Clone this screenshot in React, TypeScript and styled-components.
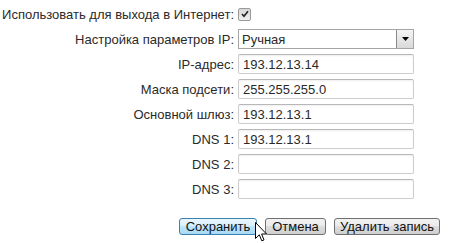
import React from "react";
import styled, { createGlobalStyle } from "styled-components";

const Global = createGlobalStyle`
  html, body { margin: 0; padding: 0; background: #fff; }
  body { font-family: "Liberation Sans", Arial, sans-serif; font-size: 13px; color: #2a2a2a; }
`;

const Page = styled.div`
  width: 457px;
  height: 243px;
  position: relative;
  overflow: hidden;
`;

const Form = styled.div`
  display: grid;
  grid-template-columns: 234px 176px;
  grid-auto-rows: 20px;
  column-gap: 4px;
  row-gap: 5px;
  padding-top: 4px;
`;

const Label = styled.div`
  display: flex;
  align-items: center;
  justify-content: flex-end;
  white-space: nowrap;
  font-size: 13px;
  color: #2a2a2a;
`;

const Cell = styled.div`
  display: flex;
  align-items: center;
`;

const Check = styled.span`
  width: 11px;
  height: 11px;
  border: 1px solid #9a9a9a;
  border-radius: 2px;
  background: linear-gradient(#d8d8d8, #eeeeee);
  display: flex;
  align-items: center;
  justify-content: center;
`;

const Input = styled.input`
  box-sizing: border-box;
  width: 176px;
  height: 20px;
  margin: 0;
  padding: 0 4px;
  border: 1px solid #cdcdcd;
  border-top-color: #b8b8b8;
  border-radius: 2px;
  box-shadow: inset 0 1px 2px rgba(0, 0, 0, 0.07);
  font-family: "Liberation Sans", Arial, sans-serif;
  font-size: 13px;
  color: #2a2a2a;
  outline: none;
`;

const Select = styled.div`
  box-sizing: border-box;
  width: 176px;
  height: 20px;
  border: 1px solid #a5a5a5;
  display: flex;
  align-items: stretch;
  background: #fff;
`;

const SelectText = styled.div`
  flex: 1;
  display: flex;
  align-items: center;
  padding-left: 3px;
  font-size: 13px;
`;

const ArrowBox = styled.div`
  width: 16px;
  border-left: 1px solid #8a8a8a;
  background: linear-gradient(#f4f4f4, #d9d9d9);
  display: flex;
  align-items: center;
  justify-content: center;
`;

const Buttons = styled.div`
  display: flex;
  gap: 8px;
  padding-left: 179px;
  margin-top: 19px;
`;

const Button = styled.button<{ $hover?: boolean; $w: number }>`
  box-sizing: border-box;
  width: ${(p) => p.$w}px;
  height: 17px;
  margin: 0;
  padding: 0 2px;
  border: 1px solid ${(p) => (p.$hover ? "#3c7fb1" : "#707070")};
  border-radius: 3px;
  background: ${(p) =>
    p.$hover
      ? "linear-gradient(#eaf6fd 0%, #d9f0fc 45%, #bee6fd 50%, #a7d9f5 100%)"
      : "linear-gradient(#f2f2f2 0%, #ebebeb 45%, #dddddd 50%, #cfcfcf 100%)"};
  font-family: "Liberation Sans", Arial, sans-serif;
  font-size: 13px;
  line-height: 15px;
  color: #111;
`;

const Cursor = styled.svg`
  position: absolute;
  left: 255px;
  top: 222px;
`;

const rows = [
  { label: "IP-адрес:", value: "193.12.13.14" },
  { label: "Маска подсети:", value: "255.255.255.0" },
  { label: "Основной шлюз:", value: "193.12.13.1" },
  { label: "DNS 1:", value: "193.12.13.1" },
  { label: "DNS 2:", value: "" },
  { label: "DNS 3:", value: "" },
];

export default function App() {
  return (
    <Page>
      <Global />
      <Form>
        <Label>Использовать для выхода в Интернет:</Label>
        <Cell>
          <Check>
            <svg width="8" height="8" viewBox="0 0 8 8">
              <path d="M1 4 L3 6.3 L7 1.2" stroke="#222" strokeWidth="1.6" fill="none" />
            </svg>
          </Check>
        </Cell>
        <Label>Настройка параметров IP:</Label>
        <Cell>
          <Select>
            <SelectText>Ручная</SelectText>
            <ArrowBox>
              <svg width="7" height="4" viewBox="0 0 7 4">
                <path d="M0 0 H7 L3.5 4 Z" fill="#000" />
              </svg>
            </ArrowBox>
          </Select>
        </Cell>
        {rows.map((r) => (
          <React.Fragment key={r.label}>
            <Label>{r.label}</Label>
            <Cell>
              <Input defaultValue={r.value} readOnly />
            </Cell>
          </React.Fragment>
        ))}
      </Form>
      <Buttons>
        <Button $hover $w={78}>Сохранить</Button>
        <Button $w={61}>Отмена</Button>
        <Button $w={106}>Удалить запись</Button>
      </Buttons>
      <Cursor width="12" height="21" viewBox="0 0 12 21">
        <path
          d="M0.5 0.5 V16.5 L4.3 12.8 L6.8 18.8 L9 17.9 L6.6 12 H11.5 Z"
          fill="#fff"
          stroke="#000"
          strokeWidth="1"
        />
      </Cursor>
    </Page>
  );
}
